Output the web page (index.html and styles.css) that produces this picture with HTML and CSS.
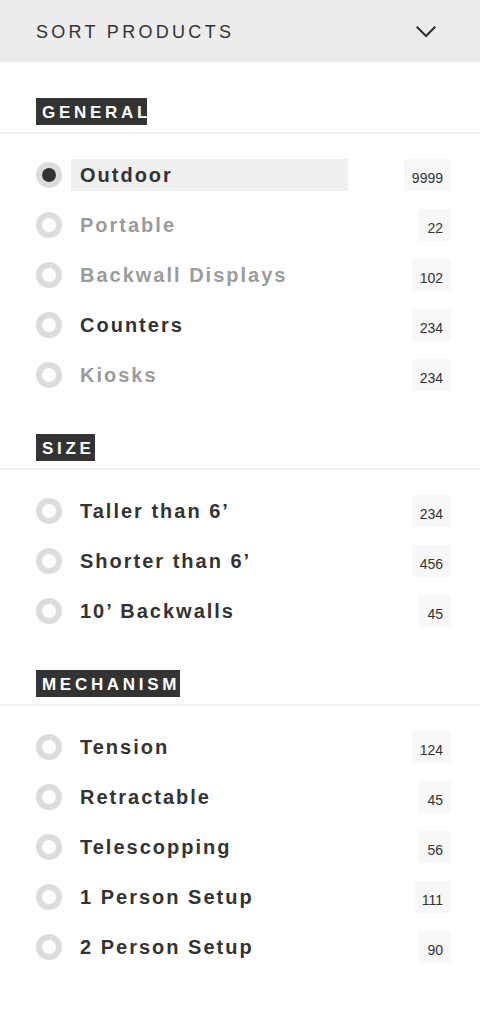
FILE: index.html
```html
<!DOCTYPE html>
<html lang="en">
<head>
<meta charset="utf-8">
<title>Sort products</title>
<link rel="stylesheet" href="styles.css">
</head>
<body>
<div class="panel">
  <header class="sort-header">
    <span class="sort-title">SORT PRODUCTS</span>
    <svg class="chevron" width="20" height="12" viewBox="0 0 20 12" aria-hidden="true">
      <path d="M1.5 1.5 L10 10 L18.5 1.5" fill="none" stroke="#333" stroke-width="2.2" stroke-linecap="square"/>
    </svg>
  </header>

  <section class="group group--first">
    <div class="group-head"><span class="tag tag--clip">GENERAL</span></div>
    <ul class="options">
      <li class="option"><span class="radio radio--on"></span><span class="label label--active">Outdoor</span><span class="count">9999</span></li>
      <li class="option option--muted"><span class="radio"></span><span class="label">Portable</span><span class="count">22</span></li>
      <li class="option option--muted"><span class="radio"></span><span class="label">Backwall Displays</span><span class="count">102</span></li>
      <li class="option"><span class="radio"></span><span class="label">Counters</span><span class="count">234</span></li>
      <li class="option option--muted"><span class="radio"></span><span class="label">Kiosks</span><span class="count">234</span></li>
    </ul>
  </section>

  <section class="group">
    <div class="group-head"><span class="tag">SIZE</span></div>
    <ul class="options">
      <li class="option"><span class="radio"></span><span class="label">Taller than 6’</span><span class="count">234</span></li>
      <li class="option"><span class="radio"></span><span class="label">Shorter than 6’</span><span class="count">456</span></li>
      <li class="option"><span class="radio"></span><span class="label">10’ Backwalls</span><span class="count">45</span></li>
    </ul>
  </section>

  <section class="group">
    <div class="group-head"><span class="tag">MECHANISM</span></div>
    <ul class="options">
      <li class="option"><span class="radio"></span><span class="label">Tension</span><span class="count">124</span></li>
      <li class="option"><span class="radio"></span><span class="label">Retractable</span><span class="count">45</span></li>
      <li class="option"><span class="radio"></span><span class="label">Telescopping</span><span class="count">56</span></li>
      <li class="option"><span class="radio"></span><span class="label">1 Person Setup</span><span class="count">111</span></li>
      <li class="option"><span class="radio"></span><span class="label">2 Person Setup</span><span class="count">90</span></li>
    </ul>
  </section>
</div>
</body>
</html>
```

FILE: styles.css
```css
* { box-sizing: border-box; }

html, body {
  margin: 0;
  padding: 0;
  background: #fff;
}

body {
  font-family: "Liberation Sans", Arial, sans-serif;
  color: #333;
}

.panel {
  width: 480px;
}

.sort-header {
  height: 62px;
  background: #ececec;
  display: flex;
  align-items: center;
  justify-content: space-between;
  padding: 0 44px 0 36px;
}

.sort-title {
  font-size: 18px;
  letter-spacing: 3.3px;
  color: #333;
  line-height: 20px;
  padding-top: 2px;
}

.chevron {
  display: block;
  margin-top: 2px;
}

.group {
  padding-top: 34px;
}

.group--first {
  padding-top: 36px;
}

.group-head {
  padding: 0 0 7px 36px;
  border-bottom: 2px solid #f2f2f2;
}

.tag {
  display: inline-block;
  vertical-align: top;
  height: 27px;
  background: #333;
  color: #fff;
  font-weight: bold;
  font-size: 17px;
  letter-spacing: 3.7px;
  line-height: 25px;
  padding: 2px 0 0 6px;
  white-space: nowrap;
}

.tag--clip {
  width: 111px;
  overflow: hidden;
}

.options {
  list-style: none;
  margin: 0;
  padding: 16px 29px 0 36px;
}

.option {
  height: 50px;
  display: flex;
  align-items: center;
}

.radio {
  flex: 0 0 26px;
  width: 26px;
  height: 26px;
  border-radius: 50%;
  border: 6px solid #dcdcdc;
  background: #fff;
  margin-right: 9px;
}

.radio--on {
  background: #333;
}

.label {
  flex: 0 0 277px;
  height: 32px;
  line-height: 32px;
  padding-left: 9px;
  font-size: 20px;
  font-weight: bold;
  letter-spacing: 2px;
  color: #333;
  white-space: nowrap;
}

.label--active {
  background: #efefef;
}

.option--muted .label {
  color: #9b9b9b;
}

.count {
  margin-left: auto;
  height: 32px;
  padding: 11px 8px 5px;
  font-size: 14px;
  line-height: 16px;
  background: #f7f7f7;
  color: #333;
}
```
